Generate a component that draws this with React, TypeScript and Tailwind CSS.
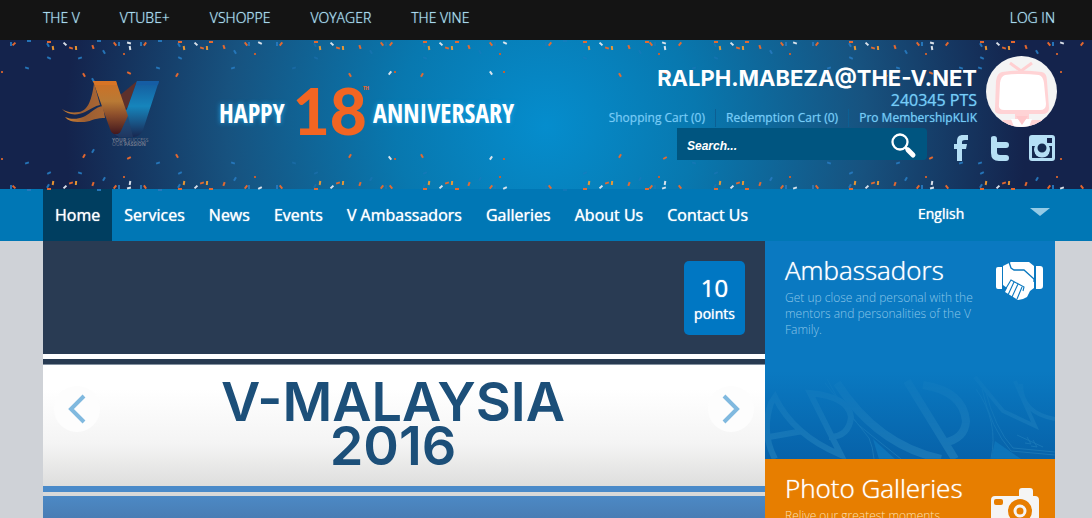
import { useState } from "react";

type Kind = "o" | "y" | "b" | "w" | "d";
type Piece = [x: number, y: number, angle: number, kind: Kind];

const FILL: Record<Kind, string> = {
  o: "#ee6a2c",
  y: "#f09a30",
  b: "#2678bd",
  w: "#e4e9f0",
  d: "#c8602f",
};

/* One burst of confetti, relative to its first piece. */
const BURST: Piece[] = [
  [0, 2, 0, "o"],
  [-1, 5, 60, "b"],
  [4, 8, 80, "y"],
  [16, 4, 45, "w"],
  [22, 8, 20, "o"],
  [27, 8, 85, "y"],
  [44, 7, 70, "o"],
  [55, 12, 60, "b"],
  [0, 18, 25, "b"],
];

const BURST_X = [49, 180, 316, 425, 585, 716, 851, 982];

const SINGLES: Piece[] = [
  [11, 4, 90, "b"], [14, 4, -45, "o"], [29, 1, 0, "b"], [99, 1, 0, "b"],
  [115, 4, 50, "o"], [119, 4, 90, "b"], [129, 3, 15, "w"], [130, 8, 80, "w"],
  [124, 14, 0, "d"], [80, 18, -20, "b"], [27, 28, 20, "b"], [2, 32, 90, "d"],
  [84, 35, 60, "o"], [129, 33, 25, "o"], [93, 40, 60, "b"],
  [141, 4, 90, "b"], [145, 4, -55, "o"], [158, 28, 20, "b"], [160, 1, 0, "b"],
  [177, 35, -60, "o"], [211, 2, 0, "o"], [246, 4, 50, "o"], [249, 4, 90, "b"],
  [260, 3, 25, "w"], [255, 14, 0, "d"], [277, 4, 90, "b"], [281, 4, -50, "o"],
  [233, 28, -20, "b"], [294, 28, -20, "b"], [350, 35, 60, "o"],
  [382, 4, 50, "o"], [386, 4, 90, "b"], [391, 4, -50, "o"], [390, 33, -50, "w"],
  [395, 32, 90, "d"], [422, 35, -60, "o"], [457, 2, 0, "o"], [491, 4, 50, "o"],
  [495, 4, 90, "b"], [505, 3, 25, "w"], [491, 33, 55, "w"], [500, 14, 0, "d"],
  [504, 32, 90, "d"], [546, 4, 90, "b"], [550, 4, -50, "o"], [565, 1, 0, "b"],
  [620, 35, 60, "o"], [647, 2, 0, "o"], [651, 4, 50, "o"], [655, 4, 90, "b"],
  [664, 3, 20, "w"], [665, 8, 80, "w"], [659, 14, 0, "d"], [665, 33, 30, "o"],
  [680, 4, -50, "o"], [694, 28, -20, "b"], [747, 2, 0, "o"], [782, 4, 50, "o"],
  [786, 4, 90, "b"], [795, 3, 20, "w"], [790, 14, 0, "d"], [813, 4, 90, "b"],
  [817, 4, -50, "o"], [829, 28, -20, "b"], [886, 35, 55, "o"], [898, 28, 20, "b"],
  [918, 4, 50, "o"], [922, 4, 90, "b"], [932, 3, 15, "w"], [932, 8, 80, "w"],
  [926, 14, 0, "d"], [931, 33, 25, "o"], [947, 4, -50, "o"], [961, 28, 20, "b"],
  [980, 28, 20, "b"], [1013, 2, 0, "o"], [1049, 4, 50, "o"], [1053, 4, 90, "b"],
  [1062, 3, 20, "w"], [1057, 14, 0, "d"], [1082, 4, -50, "o"], [1061, 32, 90, "d"],
  [1048, 33, -50, "w"],
];

const CONFETTI: Piece[] = [
  ...BURST_X.flatMap((bx) =>
    BURST.map(([x, y, a, k]): Piece => [bx + x, y, a, k])
  ),
  ...SINGLES,
];

function Confetti() {
  const pieces = CONFETTI.map(([x, y, a, k], i) => (
    <rect
      key={i}
      x={k === "d" ? -1 : -2}
      y={-1}
      width={k === "d" ? 2 : 4}
      height={2}
      fill={FILL[k]}
      opacity={k === "b" && x > 290 && x < 720 ? 0.4 : 0.95}
      transform={`translate(${x} ${y}) rotate(${a})`}
    />
  ));
  return (
    <svg className="absolute top-0 left-0 h-[151px] w-[1092px]" viewBox="0 0 1092 151" aria-hidden="true">
      <g>{pieces}</g>
      <g transform="translate(0 151) scale(1 -1)">{pieces}</g>
    </svg>
  );
}

function Logo() {
  return (
    <a href="#home" className="flex w-[98px] shrink-0 flex-col" aria-label="Home">
      <svg className="h-[57px] w-[98px]" viewBox="0 0 98 57" aria-hidden="true">
        <defs>
          <linearGradient id="vo" x1="0" y1="0" x2="0" y2="1">
            <stop offset="0" stopColor="#cf6f24" />
            <stop offset=".38" stopColor="#b97a35" />
            <stop offset=".65" stopColor="#8a4c2b" />
            <stop offset="1" stopColor="#42181e" />
          </linearGradient>
          <linearGradient id="vb" x1="0" y1="0" x2="0" y2="1">
            <stop offset="0" stopColor="#155a9d" />
            <stop offset=".45" stopColor="#1685bc" />
            <stop offset=".75" stopColor="#195384" />
            <stop offset="1" stopColor="#182750" />
          </linearGradient>
          <linearGradient id="vt" x1="0" y1="0" x2="1" y2="0">
            <stop offset="0" stopColor="#d18331" />
            <stop offset=".5" stopColor="#9a5d32" />
            <stop offset="1" stopColor="#a86634" />
          </linearGradient>
        </defs>
        <path d="M57 15 75 0 66 26 62 29Z" fill="#5d302c" />
        <path d="M32 2C30 18 26 30 17 31 10 32 4 31 0 28 5 34 15 35 23 31 29 28 33 25 38 24Z" fill="url(#vt)" />
        <path d="M3 36C13 40 22 37 29 31 34 27 38 25 41 25L43 37C33 36 27 42 18 41 11 41 6 40 3 36Z" fill="url(#vt)" />
        <path d="M75 0H97L81 49Q78 56 71 56H55Q49 55 51 49L65 28Z" fill="url(#vb)" />
        <path d="M31 0H54L66 35 59 50Q57 54 52 53 49 52 48 48Z" fill="url(#vo)" />
        <path d="M31 0H54L55 4H33Z" fill="#d87425" />
        <path d="M75 0H97L96 4H74Z" fill="#155da4" />
        <path d="M64 30 66 35 59 50Q57 54 52 53L57 56H71L66 35Z" fill="#26416b" opacity=".6" />
      </svg>
      <span className="pl-[50px] text-[5px] leading-[4px] whitespace-nowrap text-[#70788c]">
        <b>YOUR</b> SUCCESS
        <br />
        OUR <b>PASSION</b>
      </span>
    </a>
  );
}

function Avatar() {
  return (
    <svg className="h-[71px] w-[71px] shrink-0" viewBox="0 0 71 71" role="img" aria-label="Profile picture">
      <defs>
        <clipPath id="round">
          <circle cx="35.500" cy="35.500" r="35.500" />
        </clipPath>
      </defs>
      <g clipPath="url(#round)">
        <rect width="71" height="71" fill="#f4f4f4" />
        <path d="M24 7 35 15 46 7" fill="none" stroke="#ffcfd1" strokeWidth="3" />
        <path d="M16 16Q36 13 56 16 61 17 61 25L63 52Q63 58 56 58H15Q8 58 9 52L10 25Q11 17 16 16Z" fill="#ffd3d5" />
        <path d="M19 19Q35 17 53 19 57 20 58 27L60 48Q60 54 54 54H18Q12 54 13 48L14 27Q15 20 19 19Z" fill="#fff" />
        <path d="M29 58H43V64H56L60 71H12L17 64H29Z" fill="#ffd3d5" />
        <path d="M25 63 32 63 36 68 40 63 46 63 43 71H28Z" fill="#fff" />
        <path d="M30 60H42L36 69Z" fill="#ffc8cb" />
      </g>
    </svg>
  );
}

function SocialLinks() {
  return (
    <div className="flex items-center self-end text-[#b5dff5]">
      <a href="#facebook" aria-label="Facebook">
        <svg className="h-[26px] w-4" viewBox="0 0 16 26" fill="currentColor">
          <path d="M4 26V14H1V9H4V6C4 2 6 0 10 0H15V5H12Q9 5 9 7V9H14L13 14H9V26Z" />
        </svg>
      </a>
      <a href="#twitter" aria-label="Twitter" className="ml-[21px]">
        <svg className="h-[26px] w-5" viewBox="0 0 20 26" fill="currentColor">
          <path d="M1 3Q1 1 4 1 7 1 7 4V7H16Q19 7 19 10 19 13 16 13H7V17Q7 20 10 20H16Q19 20 19 23 19 26 16 26H9Q1 26 1 18Z" />
        </svg>
      </a>
      <a href="#instagram" aria-label="Instagram" className="ml-[19px]">
        <svg className="h-[26px] w-[26px]" viewBox="0 0 26 26">
          <path
            fill="currentColor"
            fillRule="evenodd"
            d="M3 0H23Q26 0 26 3V23Q26 26 23 26H3Q0 26 0 23V3Q0 0 3 0ZM3 11V22Q3 23 4 23H22Q23 23 23 22V11H20A8 8 0 1 1 6 11ZM18 3V8H23V3Z"
          />
          <path d="M3 11H6A8 8 0 1 0 20 11H23V22Q23 23 22 23H4Q3 23 3 22Z" fill="#14294f" />
          <circle cx="13" cy="13" r="6" fill="#14294f" stroke="currentColor" strokeWidth="3" />
        </svg>
      </a>
    </div>
  );
}

function Handshake() {
  return (
    <svg className="h-10 w-12 shrink-0" viewBox="0 0 48 40" fill="#fff" aria-hidden="true">
      <path d="M3 6H7V28H3Q1 28 1 26V8Q1 6 3 6ZM41 5H45Q48 5 48 8V25Q48 28 45 28H41Z" />
      <path d="M8 5 16 1H34L39 5V27L35 30 32 36 28 38 23 39 10 31 12 27 8 24Z" />
      <path d="M14 1 16 7 19 9H29L39 18V21" fill="none" stroke="#0a78bf" strokeWidth="1.300" />
      <path d="M10 29 16 19 29 26 28 30M19 21 13 34M23 23 17 36M27 26 22 38" fill="none" stroke="#0a78bf" strokeWidth="1.100" />
    </svg>
  );
}

function Camera() {
  return (
    <svg className="h-11 w-12 shrink-0" viewBox="0 0 48 44" aria-hidden="true">
      <path d="M4 8H28V3Q28 0 31 0H39Q42 0 42 3V8H44Q48 8 48 12V40Q48 44 44 44H4Q0 44 0 40V12Q0 8 4 8Z" fill="#f5f5f5" />
      <rect x="3" y="11" width="9" height="6" rx="2" fill="#e77e00" />
      <circle cx="29" cy="23" r="9" fill="#f5f5f5" stroke="#e77e00" strokeWidth="6" />
      <circle cx="29" cy="23" r="5" fill="#e77e00" stroke="#f5f5f5" strokeWidth="3" />
    </svg>
  );
}

function Lettering() {
  return (
    <svg className="absolute bottom-0 left-0 h-[90px] w-[290px]" viewBox="0 0 290 90" fill="none" stroke="#3c9acb" aria-hidden="true">
      <defs>
        <linearGradient id="fade" x1="0" y1="0" x2="0" y2="1">
          <stop offset="0" stopColor="#fff" stopOpacity=".1" />
          <stop offset="1" stopColor="#fff" />
        </linearGradient>
        <mask id="m">
          <rect width="290" height="90" fill="url(#fade)" />
        </mask>
      </defs>
      <g mask="url(#m)" opacity=".36">
        <path d="M10 90Q-4 64 6 34L10 28Q28 66 76 86L45 24Q84 28 86 48 84 68 64 68M4 68 38 62" strokeWidth="6" />
        <path d="M72 14Q112 76 176 90M142 12 190 90M158 16Q198 22 201 52 200 70 178 74" strokeWidth="8" />
        <path d="M210 8 238 42 270 57 250 12M290 50Q256 44 256 15" strokeWidth="4" />
        <path d="M62 10Q82 50 106 66L136 90M60 14 104 69Q108 78 109 90M211 20Q234 52 226 90M217 20Q226 60 246 82L290 86M220 20Q230 60 248 79L290 83" strokeWidth="1" />
        <path d="M108 70 114 90 130 90ZM230 72 226 90H256Z" fill="#1b95d6" stroke="none" />
        <path d="M252 66 278 78M262 68 266 75 260 74M268 71 272 78 266 77" strokeWidth="1" />
      </g>
    </svg>
  );
}

function Arrow({ side }: { side: "Previous" | "Next" }) {
  return (
    <button type="button" aria-label={side} className="flex size-[46px] items-center justify-center rounded-full bg-[#fdfdfd]">
      <svg className="h-[30px] w-5" viewBox="0 0 20 30" fill="none" stroke="#80b9df" strokeWidth="4">
        <path d={side === "Previous" ? "M17 2 4 15 17 28" : "M3 2 16 15 3 28"} />
      </svg>
    </button>
  );
}

const TOP_LINKS = ["THE V", "VTUBE+", "VSHOPPE", "VOYAGER", "THE VINE"];
const MENU = ["Home", "Services", "News", "Events", "V Ambassadors", "Galleries", "About Us", "Contact Us"];

export default function App() {
  const [query, setQuery] = useState("");
  return (
    <div className="flex h-screen flex-col overflow-hidden bg-[#cfd2d7] font-['Open_Sans',sans-serif]">
      <div className="flex h-10 shrink-0 items-center justify-between bg-[#141414] pr-[37px] pb-1 pl-[43px] text-sm font-light text-[#b4e6fc] [text-shadow:0_0_1px_#8cc8e4]">
        <nav className="flex gap-10" aria-label="Sites">
          {TOP_LINKS.map((t) => (
            <a key={t} href="#site">{t}</a>
          ))}
        </nav>
        <a href="#login">LOG IN</a>
      </div>

      <header className="relative h-[149px] shrink-0 bg-[radial-gradient(circle_500px_at_50%_86px,#058dcd_0,#0878af_150px,#17527f_320px,#14234c_480px)]">
        <Confetti />
        <div className="relative flex h-full justify-between pr-[35px] pl-[62px]">
          <div className="flex pt-[41px]">
            <Logo />
            <p className="ml-[59px] flex items-center self-start text-[26px] leading-[56px] font-bold whitespace-nowrap text-white font-['Open_Sans_Condensed','Liberation_Sans_Narrow',sans-serif] [text-shadow:0_0_5px_#20a8e8]">
              <span className="pt-1">HAPPY</span>
              <span className="ml-2 font-['Lato',sans-serif] text-[64px] font-black text-[#f26522] [text-shadow:none]">18</span>
              <sup className="-ml-1 self-start text-[6px] leading-[20px] text-[#f26522] [text-shadow:none]">TH</sup>
              <span className="ml-1 pt-1">ANNIVERSARY</span>
            </p>
          </div>

          <div className="flex flex-col items-end">
            <div className="flex pt-4">
              <div className="flex flex-col items-end pt-[9px] pr-[9px] text-[#76ccf7]">
                <h2 className="font-['Inter',sans-serif] text-[22px] leading-[26px] font-bold text-white">RALPH.MABEZA@THE-V.NET</h2>
                <p className="text-base leading-[18px] [text-shadow:0_0_1px_#4aa4d4]">240345 PTS</p>
                <nav className="flex text-xs leading-[18px] [text-shadow:0_0_1px_#4aa4d4]" aria-label="Account">
                  <a href="#cart" className="pr-2.5">Shopping Cart (0)</a>
                  <a href="#redeem" className="border-l border-[#0c5f93] px-2.5">Redemption Cart (0)</a>
                  <a href="#pro" className="border-l border-[#0c5f93] pl-2.5">Pro MembershipKLIK</a>
                </nav>
              </div>
              <Avatar />
            </div>
            <div className="flex h-[34px] items-start gap-[26px] pt-px pr-0.5">
              <form className="flex h-8 w-[250px] items-center rounded-r-[4px] bg-[#005580] pr-2.5 pl-2.5" onSubmit={(e) => e.preventDefault()}>
                <input
                  aria-label="Search"
                  placeholder="Search..."
                  value={query}
                  onChange={(e) => setQuery(e.target.value)}
                  className="min-w-0 flex-1 bg-transparent pt-1 font-['Liberation_Sans',sans-serif] text-xs font-bold text-white italic outline-none placeholder:text-white"
                />
                <button type="submit" aria-label="Search" className="pt-1">
                  <svg className="size-[26px]" viewBox="0 0 26 26" fill="none" stroke="#fff">
                    <circle cx="9" cy="9" r="7.500" strokeWidth="2.300" />
                    <path d="M14 14 16 16" strokeWidth="3" />
                    <path d="M17 17 22 22" strokeWidth="5" strokeLinecap="round" />
                  </svg>
                </button>
              </form>
              <SocialLinks />
            </div>
          </div>
        </div>
      </header>

      <div className="flex h-[52px] shrink-0 justify-between bg-[#0077b5] pr-[37px] pl-[43px] text-white">
        <nav className="flex" aria-label="Main">
          {MENU.map((t, i) => (
            <a
              key={t}
              href="#menu"
              className={
                i === 0
                  ? "bg-[#003e60] px-3 text-base leading-[52px] [text-shadow:0_0_1px_#fff]"
                  : "px-3 text-base leading-[52px] [text-shadow:0_0_1px_#fff]"
              }
            >
              {t}
            </a>
          ))}
        </nav>
        <label className="relative flex w-[137px] items-center pb-[2px]">
          <select aria-label="Language" className="w-full appearance-none bg-transparent text-sm outline-none [text-shadow:0_0_1px_#fff]">
            <option>English</option>
          </select>
          <svg className="pointer-events-none absolute top-[18px] right-[5px] h-[9px] w-5" viewBox="0 0 20 9" aria-hidden="true">
            <path d="M0 1H20L10 9Z" fill="#94cbe6" />
          </svg>
        </label>
      </div>

      <main className="flex min-h-0 flex-1 pr-[37px] pl-[43px]">
        <section className="relative flex min-w-0 flex-1 flex-col" aria-label="Featured">
          <div className="flex h-[113px] shrink-0 justify-end bg-[#293b53] pt-5 pr-5">
            <div className="flex h-[74px] w-[61px] flex-col items-center rounded-[5px] bg-[#0077c3] pt-[11px] text-white [text-shadow:0_0_1px_#fff]">
              <span className="text-2xl leading-8">10</span>
              <span className="text-sm leading-5">points</span>
            </div>
          </div>
          <div className="h-[11px] shrink-0 border-t-[5px] border-b border-t-white border-b-[#8391a0] bg-[#273a51]" />
          <div className="flex h-[121px] shrink-0 items-center justify-between bg-linear-to-b from-white from-20% via-[#f4f4f4] via-65% to-[#dededd] px-[11px]">
            <div className="pb-[34px]">
              <Arrow side="Previous" />
            </div>
            <h1 className="pr-[22px] pb-1 text-center font-['Inter',sans-serif] text-[54px] leading-[44px] font-semibold text-[#1c4f79]">
              V-MALAYSIA
              <br />
              2016
            </h1>
            <div className="pb-[34px]">
              <Arrow side="Next" />
            </div>
          </div>
          <div className="h-[10px] shrink-0 border-t-[6px] border-[#4a8ac9] bg-[#d9d9d9]" />
          <div className="flex-1 bg-linear-to-b from-[#4c89c5] to-[#497db4]" />
        </section>

        <aside className="flex w-[290px] shrink-0 flex-col">
          <article className="relative flex h-[218px] shrink-0 justify-between bg-linear-to-b from-[#0a79c1] from-60% to-[#0762a9] pt-[13px] pr-3 pl-5">
            <Lettering />
            <div className="relative">
              <h2 className="text-[26px] leading-8 font-light text-white [text-shadow:0_0_1px_#fff]">Ambassadors</h2>
              <p className="w-[200px] pt-1 text-xs leading-4 font-light text-[#8cc6e8]">
                Get up close and personal with the mentors and personalities of the V Family.
              </p>
            </div>
            <div className="relative pt-[7px]">
              <Handshake />
            </div>
          </article>
          <article className="flex h-[218px] shrink-0 justify-between bg-[#e77e00] pt-[13px] pr-4 pl-5">
            <div>
              <h2 className="text-[26px] leading-8 font-light text-white [text-shadow:0_0_1px_#fff]">Photo Galleries</h2>
              <p className="w-[190px] pt-1 text-xs leading-4 font-light text-[#fbe0b8]">Relive our greatest moments.</p>
            </div>
            <div className="pt-4">
              <Camera />
            </div>
          </article>
        </aside>
      </main>
    </div>
  );
}
